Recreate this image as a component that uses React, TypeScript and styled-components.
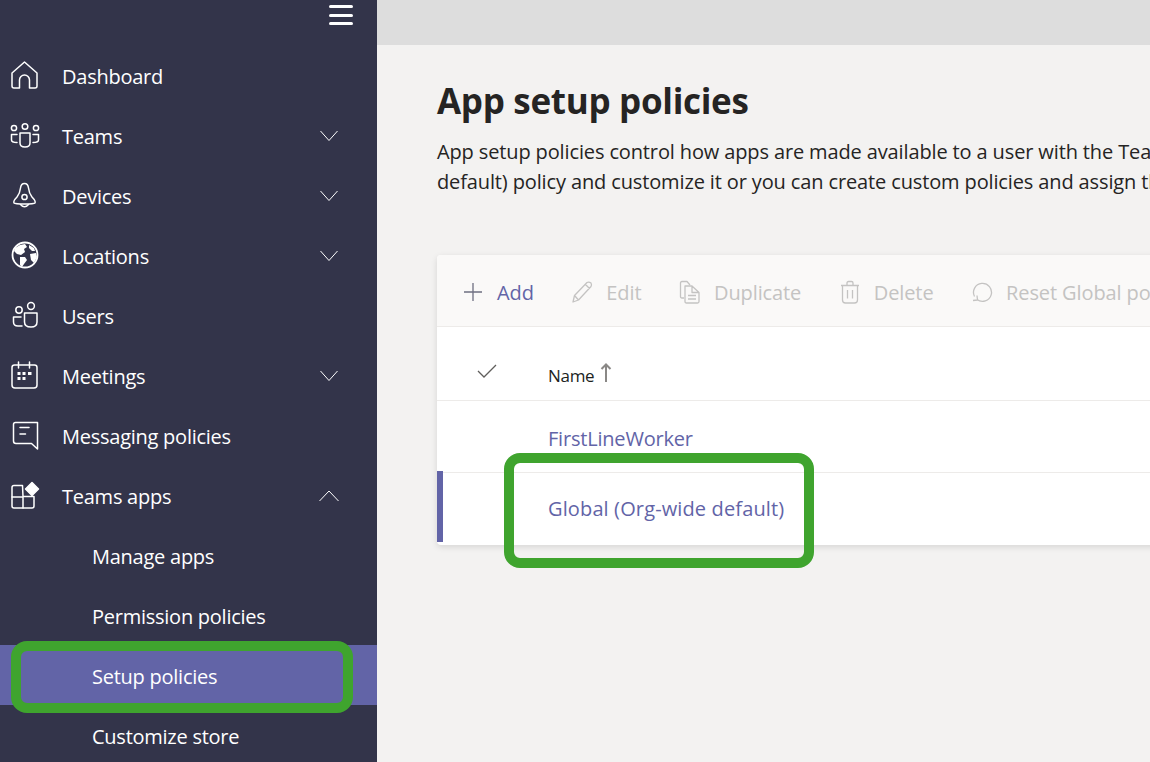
import React from "react";
import styled, { createGlobalStyle } from "styled-components";

const Global = createGlobalStyle`
  html, body { margin: 0; padding: 0; height: 100%; overflow: hidden; background: #f3f2f1; }
  #root { height: 100%; }
  * { box-sizing: border-box; }
`;

const FONT = `"Open Sans", "Noto Sans", "Liberation Sans", sans-serif`;

const Page = styled.div`
  position: relative;
  width: 1150px;
  height: 762px;
  display: flex;
  overflow: hidden;
  font-family: ${FONT};
`;
const Sidebar = styled.nav`
  width: 377px;
  flex: none;
  background: #33344a;
  color: #fff;
`;
const SideTop = styled.div`
  height: 45px;
  display: flex;
  justify-content: flex-end;
  padding: 5px 24px 0 0;
`;
const Burger = styled.div`
  width: 24px;
  height: 20px;
  display: flex;
  flex-direction: column;
  justify-content: space-between;
  & > span { display: block; height: 3px; border-radius: 1.5px; background: #fff; }
`;
const NavRow = styled.div<{ $active?: boolean; $sub?: boolean }>`
  height: 60px;
  display: flex;
  align-items: center;
  padding-left: ${(p) => (p.$sub ? "92px" : "10px")};
  background: ${(p) => (p.$active ? "#6264a7" : "transparent")};
`;
const NavIcon = styled.svg`
  width: 30px;
  height: 30px;
  flex: none;
  margin-right: 22px;
  fill: none;
  stroke: #fff;
  stroke-width: 1.5;
  stroke-linecap: round;
  stroke-linejoin: round;
`;
const NavLabel = styled.span`
  flex: 1;
  font-size: 20px;
  letter-spacing: -0.25px;
  line-height: 24px;
  position: relative;
  top: 2px;
`;
const Chevron = styled.svg`
  width: 20px;
  height: 12px;
  flex: none;
  margin: 2px 38px 0 0;
  fill: none;
  stroke: #fff;
  stroke-width: 1;
`;
const Main = styled.main`
  flex: 1;
  min-width: 0;
  display: flex;
  flex-direction: column;
`;
const TopBar = styled.div`
  height: 45px;
  flex: none;
  background: #dddddd;
`;
const Content = styled.div`
  padding: 32px 0 0 60px;
`;
const Title = styled.h1`
  margin: 0;
  font-size: 35px;
  line-height: 48px;
  font-weight: 700;
  letter-spacing: -0.3px;
  color: #252423;
  white-space: nowrap;
`;
const Desc = styled.p`
  margin: 12px 0 0;
  font-size: 20px;
  line-height: 30px;
  letter-spacing: -0.13px;
  color: #252423;
  white-space: nowrap;
`;
const Card = styled.section`
  width: 1000px;
  margin-top: 58px;
  background: #fff;
  border-radius: 4px;
  box-shadow: 0 2px 6px rgba(0, 0, 0, 0.12);
`;
const Toolbar = styled.div`
  height: 72px;
  display: flex;
  align-items: center;
  padding: 2px 0 0 26px;
  background: #faf9f8;
  border-bottom: 1px solid #edebe9;
  border-radius: 4px 4px 0 0;
`;
const Tool = styled.div<{ $on?: boolean }>`
  display: flex;
  align-items: center;
  margin-right: 37.5px;
  font-size: 20px;
  letter-spacing: -0.1px;
  white-space: nowrap;
  color: ${(p) => (p.$on ? "#6264a7" : "#c4c3c2")};
`;
const ToolText = styled.span`
  position: relative;
  top: 1px;
`;
const ToolIcon = styled.svg<{ $on?: boolean }>`
  width: 22px;
  height: 24px;
  flex: none;
  margin-right: ${(p) => (p.$on ? "12px" : "13px")};
  fill: none;
  stroke: ${(p) => (p.$on ? "#6e6f80" : "#c4c3c2")};
  stroke-width: 1.3;
  stroke-linejoin: round;
`;
const HeadRow = styled.div`
  height: 74px;
  display: flex;
  align-items: center;
  padding-top: 16px;
  border-bottom: 1px solid #edebe9;
`;
const CheckCell = styled.div`
  width: 111px;
  flex: none;
  padding: 0 0 2px 40px;
  display: flex;
`;
const HeadName = styled.span`
  font-size: 17px;
  letter-spacing: -0.3px;
  color: #201f1e;
  position: relative;
  top: 4px;
`;
const SortArrow = styled.svg`
  width: 12px;
  height: 20px;
  margin: 3px 0 0 6px;
  fill: none;
  stroke: #8a8886;
  stroke-width: 2;
`;
const Row = styled.div<{ $selected?: boolean; $last?: boolean }>`
  position: relative;
  height: ${(p) => (p.$last ? "73px" : "71px")};
  display: flex;
  align-items: ${(p) => (p.$last ? "flex-start" : "center")};
  padding: ${(p) => (p.$last ? "22px 0 0 111px" : "4px 0 0 111px")};
  border-top: ${(p) => (p.$last ? "1px solid #edebe9" : "none")};
  font-size: 20px;
  letter-spacing: ${(p) => (p.$last ? "0.13px" : "-0.2px")};
  color: #6264a7;
  &::before {
    content: "";
    display: ${(p) => (p.$selected ? "block" : "none")};
    position: absolute;
    left: 0;
    top: -2px;
    width: 6px;
    height: 71px;
    background: #6264a7;
  }
`;
const Highlight = styled.div<{ $x: number; $y: number; $w: number; $h: number }>`
  position: absolute;
  left: ${(p) => p.$x}px;
  top: ${(p) => p.$y}px;
  width: ${(p) => p.$w}px;
  height: ${(p) => p.$h}px;
  border: 10px solid #3fa42e;
  border-radius: 16px;
  pointer-events: none;
`;

const Down = () => (
  <Chevron viewBox="0 0 20 12"><path d="M1.5 1 L10 10.5 L18.5 1" /></Chevron>
);
const Up = () => (
  <Chevron viewBox="0 0 20 12"><path d="M0.5 11 L10 1 L19.5 11" /></Chevron>
);

const nav: { label: string; icon: React.ReactNode; chev?: "down" | "up"; }[] = [
  {
    label: "Dashboard",
    icon: <path d="M14.5 2 L2 13 V26 Q2 28 4 28 H9.5 V20 A5 5 0 0 1 19.5 20 V28 H25 Q27 28 27 26 V13 Z" />,
  },
  {
    label: "Teams",
    chev: "down",
    icon: (
      <>
        <circle cx="4" cy="8" r="2.6" />
        <circle cx="15" cy="6.5" r="2.8" />
        <circle cx="26" cy="8" r="2.6" />
        <path d="M10 13 H20 V23 Q20 27 15 27 Q10 27 10 23 Z" />
        <path d="M7 14.5 H1.5 V20 Q1.5 22.5 7 22.5" />
        <path d="M23 14.5 H28.5 V20 Q28.5 22.5 23 22.5" />
      </>
    ),
  },
  {
    label: "Devices",
    chev: "down",
    icon: (
      <>
        <path d="M14.5 3.5 Q11 3.5 10.5 8 Q10 13 7 17 Q3 21 4 23 Q5 24 14.5 24 Q24 24 25 23 Q26 21 22 17 Q19 13 18.5 8 Q18 3.5 14.5 3.5 Z" />
        <circle cx="14.5" cy="17" r="2.6" />
        <path d="M10.5 24.5 Q14.5 29 18.5 24.5" />
      </>
    ),
  },
  {
    label: "Locations",
    chev: "down",
    icon: (
      <>
        <circle cx="15" cy="15" r="12.5" strokeWidth="1.8" />
        <path fill="#fff" stroke="none" d="M5 8 L10 5 L15 4 L17 7 L14 9 L15 12 L11 15 L7 14 L4 11 Z" />
        <path fill="#fff" stroke="none" d="M10 17 L15 17 L17 20 L14 24 L12 27 L10 25 L10 21 Z" />
        <path fill="#fff" stroke="none" d="M19 5 L24 8 L25 11 L22 11 L19 8 Z" />
        <path fill="#fff" stroke="none" d="M20 14 L26 13 L27 17 L24 23 L21 20 Z" />
      </>
    ),
  },
  {
    label: "Users",
    icon: (
      <>
        <circle cx="9" cy="10" r="3.2" />
        <circle cx="21" cy="6" r="3.4" />
        <path d="M14.5 13 H27 V22 Q27 27 21 27 Q14.5 27 14.5 22 Z" />
        <path d="M11 17 H3.5 V22 Q3.5 26 8 26 H12" />
      </>
    ),
  },
  {
    label: "Meetings",
    chev: "down",
    icon: (
      <>
        <path d="M4.5 5 H24.5 Q27 5 27 7.5 V25 Q27 28 24 28 H5 Q2 28 2 25 V7.5 Q2 5 4.5 5 Z" />
        <path d="M8.5 2 V8 M19.5 2 V8" />
        <path fill="#fff" stroke="none" d="M7.5 12 H10.5 V15 H7.5 Z M12.5 12 H15.5 V15 H12.5 Z M18 12 H21.5 V15 H18 Z M7.5 17 H10.5 V20 H7.5 Z M12.5 17 H15.5 V20 H12.5 Z" />
      </>
    ),
  },
  {
    label: "Messaging policies",
    icon: (
      <>
        <path d="M5.5 2.5 H27.5 V29 L21.5 23.5 H6 Q3.5 23.5 3.5 21 V4.5 Q3.5 2.5 5.5 2.5 Z" />
        <path d="M10 7.5 H19 M10 14 H15.5" />
      </>
    ),
  },
  {
    label: "Teams apps",
    chev: "up",
    icon: (
      <>
        <path d="M12.5 5.5 H4 Q2 5.5 2 7.5 V26 Q2 28 4 28 H22 Q24 28 24 26 V16.5 H13 Z" />
        <path d="M2 17 H13 M13 17 V28" />
        <path fill="#fff" stroke="#fff" d="M22 2.5 L28.5 9 L22 15.5 L15.5 9 Z" />
      </>
    ),
  },
];

const sub = ["Manage apps", "Permission policies", "Setup policies", "Customize store"];

export default function App() {
  return (
    <Page>
      <Global />
      <Sidebar>
        <SideTop>
          <Burger><span /><span /><span /></Burger>
        </SideTop>
        {nav.map((n) => (
          <NavRow key={n.label}>
            <NavIcon viewBox="0 0 30 30">{n.icon}</NavIcon>
            <NavLabel>{n.label}</NavLabel>
            {n.chev === "down" && <Down />}
            {n.chev === "up" && <Up />}
          </NavRow>
        ))}
        {sub.map((s) => (
          <NavRow key={s} $sub $active={s === "Setup policies"}>
            <NavLabel>{s}</NavLabel>
          </NavRow>
        ))}
      </Sidebar>
      <Main>
        <TopBar />
        <Content>
          <Title>App setup policies</Title>
          <Desc>
            App setup policies control how apps are made available to a user with the Teams app. You can edit the Global (Org-wide
            <br />
            default) policy and customize it or you can create custom policies and assign them to users in your organization.
          </Desc>
          <Card>
            <Toolbar>
              <Tool $on>
                <ToolIcon $on viewBox="0 0 22 24"><path d="M1 12 H19 M10 3 V21" /></ToolIcon>
                <ToolText>Add</ToolText>
              </Tool>
              <Tool>
                <ToolIcon viewBox="0 0 22 24">
                  <path d="M2 22 L3.5 15.5 L16 2.5 Q18 1.5 20 3 Q21 5 20 6.5 L7.5 20 Z M3.5 15.5 L7.5 20 M14.5 4.5 L18.5 8.5" />
                </ToolIcon>
                <ToolText>Edit</ToolText>
              </Tool>
              <Tool>
                <ToolIcon viewBox="0 0 22 24">
                  <path d="M5 18 H3 Q1.5 18 1.5 16.5 V3 Q1.5 1.5 3 1.5 H8 L11 5" />
                  <path d="M6 6 H13 L20 12.5 V21.5 Q20 23 18.5 23 H7.5 Q6 23 6 21.5 Z M13 6 V12.5 H20 M9 15.5 H17 M9 19 H17" />
                </ToolIcon>
                <ToolText>Duplicate</ToolText>
              </Tool>
              <Tool>
                <ToolIcon viewBox="0 0 22 24">
                  <path d="M2 5.5 H20 M8 5.5 V3 Q8 1.5 9.5 1.5 H12.5 Q14 1.5 14 3 V5.5 M3.5 5.5 V20 Q3.5 23 6.5 23 H15.5 Q18.5 23 18.5 20 V5.5 M8.5 10 V18.5 M13.5 10 V18.5" />
                </ToolIcon>
                <ToolText>Delete</ToolText>
              </Tool>
              <Tool>
                <ToolIcon viewBox="0 0 22 24">
                  <path d="M6 19.5 A9 9 0 1 0 3.5 16.5 M2 20.5 L6.5 20 L6 15.5" />
                </ToolIcon>
                <ToolText>Reset Global policy</ToolText>
              </Tool>
            </Toolbar>
            <HeadRow>
              <CheckCell>
                <svg width="20" height="16" viewBox="0 0 20 16" fill="none" stroke="#605e5c" strokeWidth="1.3">
                  <path d="M1 8 L7 14 L19 2" />
                </svg>
              </CheckCell>
              <HeadName>Name</HeadName>
              <SortArrow viewBox="0 0 12 20"><path d="M6 19 V1.5 M1.5 6 L6 1.5 L10.5 6" /></SortArrow>
            </HeadRow>
            <Row>FirstLineWorker</Row>
            <Row $selected $last>Global (Org-wide default)</Row>
          </Card>
        </Content>
      </Main>
      <Highlight $x={11} $y={641} $w={342} $h={72} />
      <Highlight $x={504} $y={453} $w={310} $h={115} />
    </Page>
  );
}
